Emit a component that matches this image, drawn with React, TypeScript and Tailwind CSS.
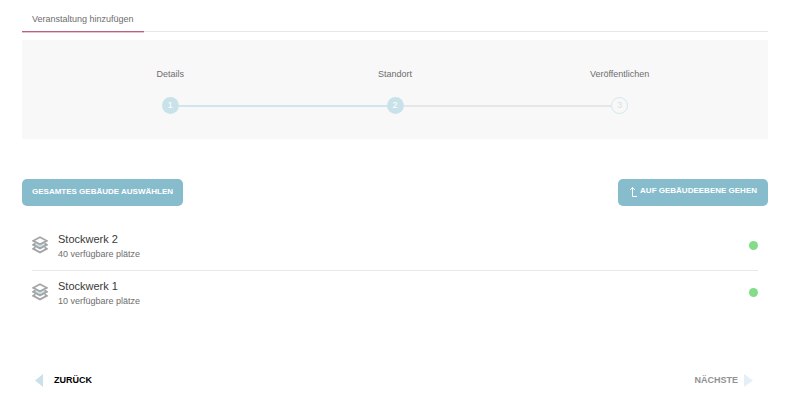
const steps = [
  { label: "Details", state: "done" },
  { label: "Standort", state: "current" },
  { label: "Veröffentlichen", state: "open" },
];

const floors = [
  { name: "Stockwerk 2", seats: 40 },
  { name: "Stockwerk 1", seats: 10 },
];

function LayersIcon() {
  return (
    <svg className="h-[18px] w-4 shrink-0" viewBox="0 0 16 18" fill="none" stroke="#a3a5a6" strokeWidth="1.8" aria-hidden="true">
      <path d="M3.4 11.3 L1.2 12.8 L8 16.4 L14.8 12.8 L12.6 11.3" />
      <path d="M8 4.8 L15 8.8 L8 12.6 L1 8.8 Z" fill="#c9e4ed" stroke="none" />
      <path d="M3.4 7.3 L1.2 8.8 L8 12.4 L14.8 8.8 L12.6 7.3" />
      <path d="M8 1.3 L14.8 4.8 L8 8.3 L1.2 4.8 Z" fill="#fff" />
    </svg>
  );
}

function Stepper() {
  return (
    <ol className="mt-2 grid h-[99px] grid-cols-3 bg-[#f8f8f8] px-9 pt-7">
      {steps.map((step, i) => (
        <li key={step.label} className="flex flex-col items-center gap-4">
          <span className="leading-[13px]">{step.label}</span>
          <div className="flex w-full items-center">
            <span className={`h-[2px] flex-1 ${i === 0 ? "bg-transparent" : i === 1 ? "bg-[#d1e6ec]" : "bg-[#e4e7e8]"}`} />
            <span
              className={`flex size-[17px] items-center justify-center rounded-full text-[9px] leading-none ${
                step.state === "open" ? "border border-[#d5e7ee] text-[#dedede]" : "bg-[#c9e2ea] text-white"
              }`}
            >
              {i + 1}
            </span>
            <span className={`h-[2px] flex-1 ${i === 2 ? "bg-transparent" : i === 0 ? "bg-[#d1e6ec]" : "bg-[#e4e7e8]"}`} />
          </div>
        </li>
      ))}
    </ol>
  );
}

export default function App() {
  return (
    <main className="bg-white pr-8 pl-[22px] font-['Liberation_Sans',Arial,sans-serif] text-[9px] text-[#6e6e6e]">
      <nav className="flex h-8 items-end border-b border-[#e8e8e8]">
        <a href="#add" className="-mb-px h-[25px] border-b border-[#b9627f] px-[10px] pt-[5px] leading-[15px] shadow-[0_1px_0_#e8c3cf]">
          Veranstaltung hinzufügen
        </a>
      </nav>

      <Stepper />

      <div className="mt-10 flex justify-between text-[8px] font-bold text-white">
        <button type="button" className="h-[27px] rounded-[5px] bg-[#87bccd] px-[10px] pb-[2px]">
          GESAMTES GEBÄUDE AUSWÄHLEN
        </button>
        <button type="button" className="flex h-[27px] items-center gap-[3px] rounded-[5px] bg-[#87bccd] px-[11px]">
          <svg className="h-[11px] w-2" viewBox="0 0 8 11" fill="none" stroke="#fff" aria-hidden="true">
            <path d="M3.5 0.5 V9.5 H8 M1 3 L3.5 0.7 L6 3" />
          </svg>
          <span className="pb-1">AUF GEBÄUDEEBENE GEHEN</span>
        </button>
      </div>

      <ul className="mt-[18px] px-[10px]">
        {floors.map((floor) => (
          <li key={floor.name} className="flex h-[47px] items-center gap-[10px] border-b border-[#e8e8e8] pb-1 last:border-transparent">
            <LayersIcon />
            <div className="flex-1 pt-[2px]">
              <h2 className="text-[11px] leading-4 text-[#3a3a3a]">{floor.name}</h2>
              <p className="leading-[14px]">{floor.seats} verfügbare plätze</p>
            </div>
            <span className="size-[9px] rounded-full bg-[#83dc88]" />
          </li>
        ))}
      </ul>

      <footer className="mt-14 flex justify-between pr-[15px] pl-[13px] font-bold">
        <button type="button" className="flex items-center gap-[11px] text-black">
          <svg className="h-[13px] w-2" viewBox="0 0 8 13" aria-hidden="true">
            <path d="M8 0 V13 L0 6.5 Z" fill="#c9e2ea" />
          </svg>
          ZURÜCK
        </button>
        <button type="button" disabled className="flex items-center gap-[6px] text-[#929292]">
          NÄCHSTE
          <svg className="h-[13px] w-[9px]" viewBox="0 0 9 13" aria-hidden="true">
            <path d="M0 0 V13 L9 6.5 Z" fill="#e3f0f5" />
          </svg>
        </button>
      </footer>
    </main>
  );
}
